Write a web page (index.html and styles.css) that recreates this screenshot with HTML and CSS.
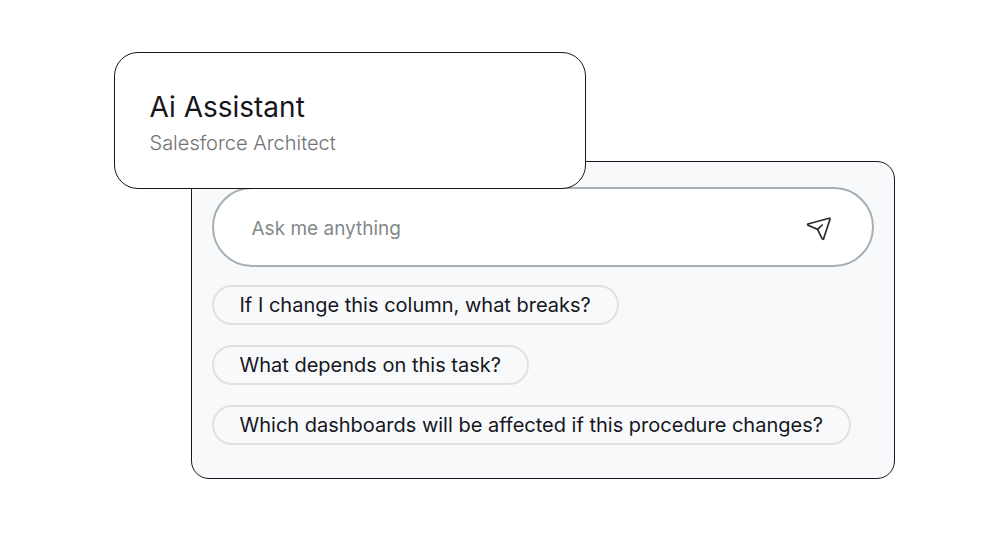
FILE: index.html
```
<!DOCTYPE html>
<html lang="en">
<head>
  <meta charset="UTF-8" />
  <meta name="viewport" content="width=device-width, initial-scale=1" />
  <title>Ai Assistant</title>
  <link rel="stylesheet" href="styles.css">
</head>
<body>
  <main class="assistant">
    <header class="assistant-header">
      <h1 class="assistant-title">Ai Assistant</h1>
      <p class="assistant-role">Salesforce Architect</p>
    </header>
    <section class="panel">
      <form class="prompt">
        <input class="prompt-input" type="text" placeholder="Ask me anything" aria-label="Ask me anything">
        <button class="send" type="submit" aria-label="Send">
          <svg width="26" height="26" viewBox="0 0 26 26" fill="none" stroke="currentColor" stroke-width="1.7" stroke-linecap="round" stroke-linejoin="round">
            <path d="M2 8 Q1.2 8.6 2 9.2 L11.6 13.4 L16.2 22.8 Q17 23.8 17.6 22.8 L24 3.2 Q24.2 2 23 2.2 Z" />
            <path d="M11.6 13.4 L16.2 9" />
          </svg>
        </button>
      </form>
      <div class="suggestions">
        <button class="chip" type="button">If I change this column, what breaks?</button>
        <button class="chip" type="button">What depends on this task?</button>
        <button class="chip" type="button">Which dashboards will be affected if this procedure changes?</button>
      </div>
    </section>
  </main>
</body>
</html>
```

FILE: styles.css
```
* {
  box-sizing: border-box;
}

body {
  margin: 0;
  padding: 52px 24px;
  background-color: #ffffff;
  color: #16161d;
  font-family: Inter, "Liberation Sans", sans-serif;
}

.assistant {
  max-width: 781px;
  margin: 0 auto;
}

/* the header card sits over the top edge of the panel */
.assistant-header {
  position: relative;
  z-index: 1;
  max-width: 472px;
  padding: 36px 35px 31px;
  background-color: #ffffff;
  border: 1px solid #16161d;
  border-radius: 24px;
}

.assistant-title {
  margin: 0;
  font-size: 28px;
  line-height: 36px;
  font-weight: 400;
}

.assistant-role {
  margin: 4px 0 0;
  color: #6f7274;
  font-size: 20px;
  line-height: 28px;
  font-weight: 300;
}

.panel {
  margin: -28px 0 0 77px;
  padding: 25px 20px 33px;
  background-color: #f8f9fb;
  border: 1px solid #16161d;
  border-radius: 18px;
}

.prompt {
  display: flex;
  align-items: center;
  height: 80px;
  padding: 3px 40px 0 38px;
  background-color: #ffffff;
  border: 2px solid #a6afb3;
  border-radius: 40px;
}

.prompt-input {
  flex: 1;
  min-width: 0;
  padding: 0;
  border: none;
  outline: none;
  background: none;
  color: #16161d;
  font-family: inherit;
  font-size: 19px;
  line-height: 28px;
}

.prompt-input::placeholder {
  color: #84888a;
  opacity: 1;
}

.send {
  display: flex;
  padding: 0;
  border: none;
  background: none;
  color: #2b2b33;
  cursor: pointer;
}

.suggestions {
  display: flex;
  flex-direction: column;
  align-items: flex-start;
  gap: 20px;
  margin-top: 18px;
}

.chip {
  min-height: 40px;
  padding: 0 26px;
  background: none;
  border: 2px solid #dfe1e3;
  border-radius: 20px;
  color: #16161d;
  font-family: inherit;
  font-size: 20px;
  line-height: 28px;
  text-align: left;
  cursor: pointer;
}

.chip:hover {
  background-color: #ffffff;
}
```
